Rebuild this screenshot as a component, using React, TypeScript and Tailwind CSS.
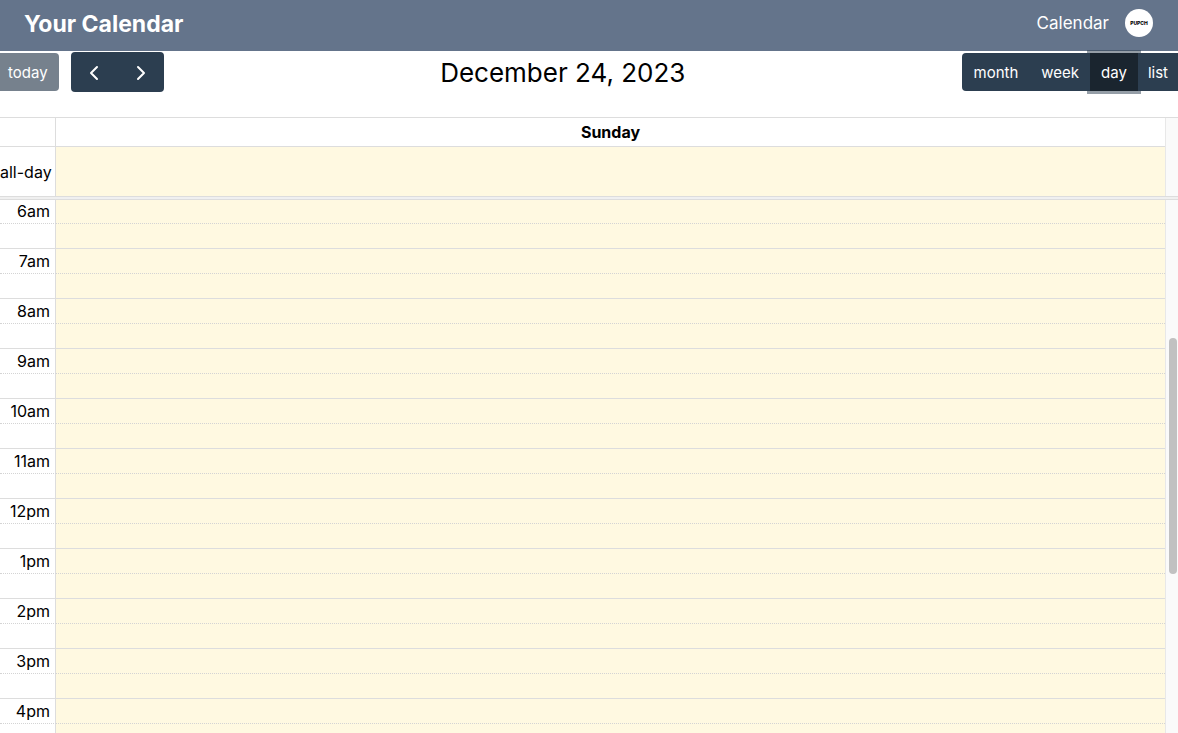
import { ChevronLeft, ChevronRight } from "lucide-react";

const hours = ["6am", "7am", "8am", "9am", "10am", "11am", "12pm", "1pm", "2pm", "3pm", "4pm"];

const toolButton = "flex h-[38px] items-center bg-[#2c3e50] pt-px text-white";

function Header() {
  return (
    <header className="flex h-[51px] shrink-0 items-center justify-between bg-[#64748b] px-6 pb-[5px] text-white">
      <h1 className="pt-0.5 text-[23px] leading-8 font-bold">Your Calendar</h1>
      <nav className="flex items-center gap-4 pr-px">
        <a href="#calendar" className="text-[17px] leading-6">Calendar</a>
        <a
          href="#profile"
          aria-label="Profile"
          className="flex size-7 items-center justify-center rounded-full bg-white text-[5px] leading-none font-extrabold text-black"
        >
          PUPCH
        </a>
      </nav>
    </header>
  );
}

function Toolbar() {
  return (
    <div className="flex h-[66px] shrink-0 items-start justify-between pt-px text-[15px]">
      <div className="flex items-center gap-3">
        <button type="button" className="flex h-[38px] w-[59px] items-center rounded-r bg-[#76818d] pt-px pl-2 text-white">
          today
        </button>
        <div className="flex h-10 w-[93px] rounded bg-[#2c3e50] text-white">
          <button type="button" aria-label="Previous day" className="flex flex-1 items-center justify-center pt-px">
            <ChevronLeft className="size-6" />
          </button>
          <button type="button" aria-label="Next day" className="flex flex-1 items-center justify-center pt-px">
            <ChevronRight className="size-6" />
          </button>
        </div>
      </div>
      <h2 className="text-[26px] leading-[42px]">December 24, 2023</h2>
      <div className="flex h-10 items-center">
        <button type="button" className={`${toolButton} rounded-l px-3`}>month</button>
        <button type="button" className={`${toolButton} px-[11px]`}>week</button>
        <button
          type="button"
          aria-pressed="true"
          className="relative z-10 flex h-[38px] items-center bg-[#1a252f] px-[11px] pt-px text-white ring-3 ring-[#2c3e50]/50"
        >
          day
        </button>
        <button type="button" className={`${toolButton} px-[10px]`}>list</button>
      </div>
    </div>
  );
}

function DayHead() {
  return (
    <div className="flex shrink-0 border-t border-[#ddd]">
      <div className="flex-1">
        <table className="w-full table-fixed border-separate border-spacing-0">
          <colgroup>
            <col className="w-14" />
            <col />
          </colgroup>
          <thead>
            <tr className="h-[29px]">
              <td className="border-r border-b border-[#ddd]" />
              <th scope="col" className="border-b border-[#ddd] font-bold">Sunday</th>
            </tr>
          </thead>
          <tbody>
            <tr className="h-[49px]">
              <th scope="row" className="border-r border-[#ddd] pr-1 text-right font-normal whitespace-nowrap">
                all-day
              </th>
              <td className="bg-[#fff9e1]" />
            </tr>
          </tbody>
        </table>
      </div>
      <div className="w-[13px] border-l border-[#e8e8e8] bg-[#fafafa]" />
    </div>
  );
}

function TimeGrid() {
  return (
    <div className="flex min-h-0 flex-1 overflow-hidden">
      <div className="flex-1">
        <table className="w-full table-fixed border-separate border-spacing-0">
          <colgroup>
            <col className="w-14" />
            <col />
          </colgroup>
          {hours.map((hour) => (
            <tbody key={hour} className="group">
              <tr className="h-[25px] group-first-of-type:h-6">
                <th
                  scope="row"
                  className="border-r border-b border-r-[#ddd] border-b-[#d4d4d4] pr-[5px] text-right leading-[23px] font-normal [border-bottom-style:dotted]"
                >
                  {hour}
                </th>
                <td className="border-b border-[#d4d4d4] bg-[#fff9e1] [border-bottom-style:dotted]" />
              </tr>
              <tr className="h-[25px]">
                <td className="border-r border-b border-[#ddd]" />
                <td className="border-b border-[#ddd] bg-[#fff9e1]" />
              </tr>
            </tbody>
          ))}
        </table>
      </div>
      <div className="flex w-[13px] flex-col border-l border-[#e8e8e8] bg-[#fafafa] pr-px pl-[3px]">
        <div className="grow-[138]" />
        <div className="grow-[236] rounded-full bg-[#c1c1c1]" />
        <div className="grow-[159]" />
      </div>
    </div>
  );
}

export default function App() {
  return (
    <div className="flex h-screen flex-col overflow-hidden bg-white font-[Inter,'Liberation_Sans',sans-serif] text-base leading-6 text-black">
      <Header />
      <main className="flex min-h-0 flex-1 flex-col">
        <Toolbar />
        <DayHead />
        <div className="h-1 shrink-0 border-y border-[#ddd] bg-[#f0f0f0]" />
        <TimeGrid />
      </main>
    </div>
  );
}
